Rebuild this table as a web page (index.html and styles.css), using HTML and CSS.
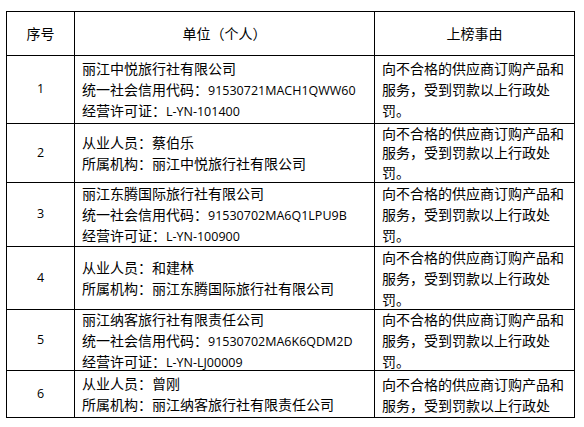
FILE: index.html
```html
<!DOCTYPE html>
<html lang="zh-CN">
<head>
<meta charset="utf-8">
<title>上榜名单</title>
<link rel="stylesheet" href="styles.css">
</head>
<body>
<div class="table">
  <div class="cell center">序号</div>
  <div class="cell center">单位（个人）</div>
  <div class="cell center">上榜事由</div>

  <div class="cell center"><span class="lat">1</span></div>
  <div class="cell left"><div>丽江中悦旅行社有限公司<br>统一社会信用代码：<span class="lat">91530721MACH1QWW60</span><br>经营许可证：<span class="lat">L-YN-101400</span></div></div>
  <div class="cell left"><div>向不合格的供应商订购产品和<br>服务，受到罚款以上行政处<br>罚。</div></div>

  <div class="cell center"><span class="lat">2</span></div>
  <div class="cell left"><div>从业人员：蔡伯乐<br>所属机构：丽江中悦旅行社有限公司</div></div>
  <div class="cell left tight"><div>向不合格的供应商订购产品和<br>服务，受到罚款以上行政处<br>罚。</div></div>

  <div class="cell center"><span class="lat">3</span></div>
  <div class="cell left"><div>丽江东腾国际旅行社有限公司<br>统一社会信用代码：<span class="lat">91530702MA6Q1LPU9B</span><br>经营许可证：<span class="lat">L-YN-100900</span></div></div>
  <div class="cell left"><div>向不合格的供应商订购产品和<br>服务，受到罚款以上行政处<br>罚。</div></div>

  <div class="cell center"><span class="lat">4</span></div>
  <div class="cell left"><div>从业人员：和建林<br>所属机构：丽江东腾国际旅行社有限公司</div></div>
  <div class="cell left"><div>向不合格的供应商订购产品和<br>服务，受到罚款以上行政处<br>罚。</div></div>

  <div class="cell center"><span class="lat">5</span></div>
  <div class="cell left"><div>丽江纳客旅行社有限责任公司<br>统一社会信用代码：<span class="lat">91530702MA6K6QDM2D</span><br>经营许可证：<span class="lat">L-YN-LJ00009</span></div></div>
  <div class="cell left"><div>向不合格的供应商订购产品和<br>服务，受到罚款以上行政处<br>罚。</div></div>

  <div class="cell center"><span class="lat">6</span></div>
  <div class="cell left"><div>从业人员：曾刚<br>所属机构：丽江纳客旅行社有限责任公司</div></div>
  <div class="cell left top"><div>向不合格的供应商订购产品和<br>服务，受到罚款以上行政处</div></div>
</div>
</body>
</html>
```

FILE: styles.css
```css
html, body {
  margin: 0;
  padding: 0;
  background: #fff;
}

body {
  font-family: "Noto Sans CJK SC", "Noto Sans CJK TC", sans-serif;
  font-size: 14px;
  line-height: 21px;
  color: #000;
}

.table {
  display: grid;
  grid-template-columns: 67px 299px 199px;
  grid-template-rows: 43px 67px 58px 63px 62px 60px 46px;
  gap: 1px;
  background: #000;
  border: 1px solid #000;
  width: max-content;
  margin: 11px 0 0 6px;
}

.cell {
  background: #fff;
  display: flex;
  align-items: center;
  overflow: hidden;
  white-space: nowrap;
}

.center {
  justify-content: center;
}

.left {
  justify-content: flex-start;
  padding-left: 7px;
}

.tight {
  line-height: 19.3px;
}

.top {
  align-items: flex-start;
  padding-top: 3px;
}

.lat {
  font-family: "Open Sans", "Liberation Sans", sans-serif;
  font-size: 12.5px;
  line-height: 1;
}
```
